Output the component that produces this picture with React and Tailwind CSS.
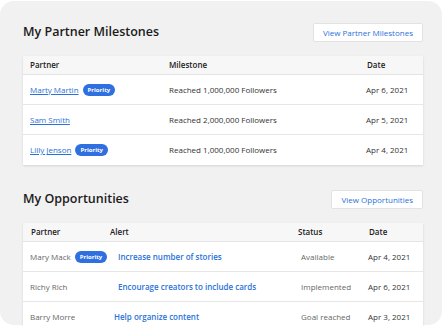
const milestones = [
  { name: 'Marty Martin', priority: true, text: 'Reached 1,000,000 Followers', date: 'Apr 6, 2021' },
  { name: 'Sam Smith', priority: false, text: 'Reached 2,000,000 Followers', date: 'Apr 5, 2021' },
  { name: 'Lilly Jenson', priority: true, text: 'Reached 1,000,000 Followers', date: 'Apr 4, 2021' },
];

const opportunities = [
  { name: 'Mary Mack', priority: true, alert: 'Increase number of stories', alertPad: 'pl-[15px]', status: 'Available', date: 'Apr 4, 2021' },
  { name: 'Richy Rich', priority: false, alert: 'Encourage creators to include cards', alertPad: 'pl-[15px]', status: 'Implemented', date: 'Apr 6, 2021' },
  { name: 'Barry Morre', priority: false, alert: 'Help organize content', alertPad: 'pl-[11px]', status: 'Goal reached', date: 'Apr 3, 2021' },
];

function Priority() {
  return (
    <span className="ml-[4px] inline-flex h-[12px] items-center rounded-full bg-[#2f6fdf] px-[5px] text-[6px] font-bold leading-none text-white">
      Priority
    </span>
  );
}

function SectionHeader({ title, button }) {
  return (
    <div className="flex h-[19px] items-center justify-between">
      <h2 className="text-[12.5px] font-semibold leading-none text-[#1b1b1b]">{title}</h2>
      <button className="h-[19px] rounded-[2px] border border-[#e2e2e2] bg-white px-[9px] text-[8px] leading-none text-[#2a72d9]">
        {button}
      </button>
    </div>
  );
}

export default function App() {
  return (
    <div className="h-[326px] w-[447px] overflow-hidden bg-white" style={{ fontFamily: '"Open Sans", "Noto Sans", sans-serif' }}>
      <div className="mt-px h-[324px] w-[442px] rounded-[14px] bg-[#f1f1f1] pl-[23px] pr-[19px] pt-[22px]">
        <SectionHeader title="My Partner Milestones" button="View Partner Milestones" />

        <div className="mt-[14px] bg-white text-[8px] text-[#333] shadow-[0_1px_2px_rgba(0,0,0,0.12)]">
          <div className="grid h-[19px] grid-cols-[139px_198px_1fr] items-center border-b border-[#e4e4e4] bg-[#f7f7f7] font-semibold text-[#222]">
            <div className="pl-[7px]">Partner</div>
            <div className="pl-[7px]">Milestone</div>
            <div className="pl-[7px]">Date</div>
          </div>
          {milestones.map((m, i) => (
            <div
              key={m.name}
              className={`grid h-[30px] grid-cols-[139px_198px_1fr] items-center ${i < milestones.length - 1 ? 'border-b border-[#e6e6e6]' : ''}`}
            >
              <div className="flex items-center pl-[7px]">
                <a className="text-[#2a72d9] underline">{m.name}</a>
                {m.priority && <Priority />}
              </div>
              <div className="pl-[7px]">{m.text}</div>
              <div className="pl-[6px]">{m.date}</div>
            </div>
          ))}
        </div>

        <div className="mt-[25px]">
          <SectionHeader title="My Opportunities" button="View Opportunities" />
        </div>

        <div className="mt-[14px] bg-white text-[8px] text-[#333] shadow-[0_1px_2px_rgba(0,0,0,0.12)]">
          <div className="grid h-[19px] grid-cols-[80px_188px_70px_1fr] items-center border-b border-[#e4e4e4] bg-[#f7f7f7] font-semibold text-[#222]">
            <div className="pl-[8px]">Partner</div>
            <div className="pl-[7px]">Alert</div>
            <div className="pl-[7px]">Status</div>
            <div className="pl-[8px]">Date</div>
          </div>
          {opportunities.map((o) => (
            <div key={o.name} className="grid h-[30px] grid-cols-[80px_188px_70px_1fr] items-center border-b border-[#e6e6e6]">
              <div className="flex items-center whitespace-nowrap pl-[7px] text-[#666]">
                {o.name}
                {o.priority && <Priority />}
              </div>
              <div className={`whitespace-nowrap font-semibold text-[#2a72d9] ${o.alertPad}`}>{o.alert}</div>
              <div className="pl-[10px] text-[#666]">{o.status}</div>
              <div className="pl-[7px] text-[#333]">{o.date}</div>
            </div>
          ))}
        </div>
      </div>
    </div>
  );
}
